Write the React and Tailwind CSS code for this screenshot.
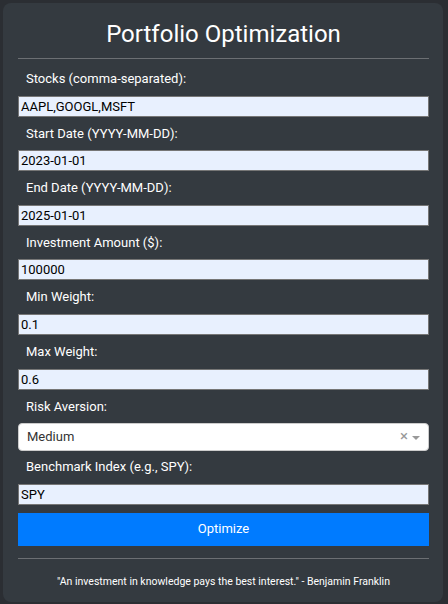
import React, { useState } from "react";

const fields = [
  { label: "Stocks (comma-separated):", value: "AAPL,GOOGL,MSFT" },
  { label: "Start Date (YYYY-MM-DD):", value: "2023-01-01" },
  { label: "End Date (YYYY-MM-DD):", value: "2025-01-01" },
  { label: "Investment Amount ($):", value: "100000" },
  { label: "Min Weight:", value: "0.1" },
  { label: "Max Weight:", value: "0.6" },
];

const Field = ({ label, value, first }) => (
  <div>
    <div
      className={`${first ? "mt-[10px]" : "mt-[7px]"} mb-[7px] pl-2 h-[19.6px] leading-[19.6px] text-[13px] text-white`}
    >
      {label}
    </div>
    <input
      type="text"
      defaultValue={value}
      className="block w-full h-[21px] px-[2px] bg-[#e8f0fe] border border-[#767676] text-[13px] text-black outline-none"
    />
  </div>
);

const App = () => {
  const [risk] = useState("Medium");

  return (
    <div className="min-h-[604px] bg-[#2b2e33] pt-[3px] pl-[3px] pr-[5px] font-['Roboto',sans-serif]">
      <div className="bg-[#343a40] rounded-lg pl-[15px] pr-[14px] pt-[17px] pb-[12px]">
        <h1 className="text-center text-white text-[24px] leading-[28px] mb-[10px]">
          Portfolio Optimization
        </h1>
        <hr className="border-0 border-t border-[#6c6f73]" />

        {fields.map((f, i) => (
          <Field key={f.label} label={f.label} value={f.value} first={i === 0} />
        ))}

        <div className="mt-[7px] mb-[6px] pl-2 h-5 leading-5 text-[13px] text-white">
          Risk Aversion:
        </div>
        <div className="flex items-center h-[28px] bg-white border border-[#cccccc] rounded pl-2 pr-[8px]">
          <span className="flex-1 text-[13px] text-[#333333]">{risk}</span>
          <span className="text-[#999999] text-[15px] leading-none mr-[4px]">×</span>
          <span className="w-0 h-0 border-l-[4px] border-r-[4px] border-t-[4px] border-l-transparent border-r-transparent border-t-[#999999] mt-[3px]" />
        </div>

        <div className="mt-[6px] mb-[7px] pl-2 h-5 leading-5 text-[13px] text-white">
          Benchmark Index (e.g., SPY):
        </div>
        <input
          type="text"
          defaultValue="SPY"
          className="block w-full h-[21px] px-[2px] bg-[#e8f0fe] border border-[#767676] text-[13px] text-black outline-none"
        />

        <button className="mt-[8px] w-full h-[33px] bg-[#007bff] text-white text-[13px]">
          Optimize
        </button>

        <hr className="mt-[12px] border-0 border-t border-[#6c6f73]" />

        <p className="mt-[15px] text-center text-white text-[10.5px] leading-[16px]">
          "An investment in knowledge pays the best interest." - Benjamin Franklin
        </p>
      </div>
    </div>
  );
};

export default App;
